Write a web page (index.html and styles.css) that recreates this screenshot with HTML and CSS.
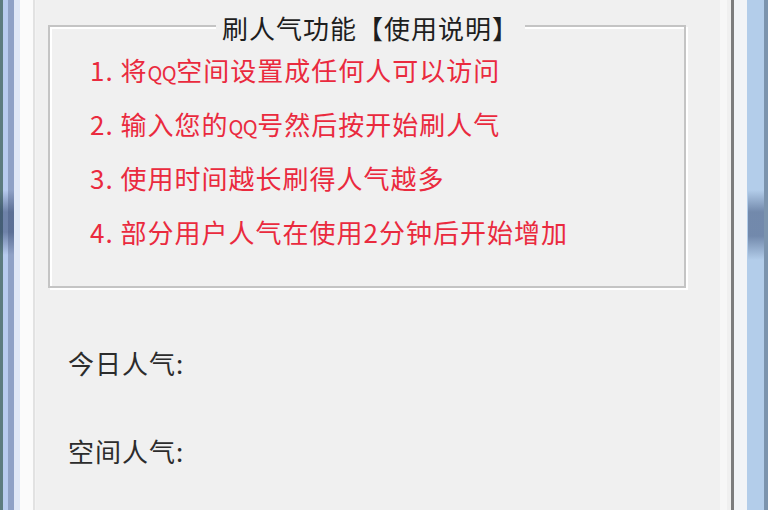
FILE: index.html
```html
<!DOCTYPE html>
<html lang="zh-CN">
<head>
<meta charset="utf-8">
<title>刷人气</title>
<link rel="stylesheet" href="styles.css">
</head>
<body>
<div class="window">
  <div class="frame frame-left"></div>
  <main class="client">
    <fieldset class="group">
      <legend class="group-title">刷人气功能【使用说明】</legend>
      <ol class="steps">
        <li>1. 将<span class="qq">QQ</span>空间设置成任何人可以访问</li>
        <li>2. 输入您的<span class="qq">QQ</span>号然后按开始刷人气</li>
        <li>3. 使用时间越长刷得人气越多</li>
        <li>4. 部分用户人气在使用2分钟后开始增加</li>
      </ol>
    </fieldset>
    <section class="stats">
      <div class="stat">今日人气:</div>
      <div class="stat">空间人气:</div>
    </section>
  </main>
  <div class="frame frame-right"></div>
</div>
</body>
</html>
```
FILE: styles.css
```css
html, body {
  margin: 0;
  padding: 0;
  background: #f0f0f0;
}
body {
  width: 768px;
  height: 510px;
  overflow: hidden;
  font-family: "Noto Sans CJK SC", "Noto Sans", sans-serif;
}
.window {
  display: flex;
  height: 510px;
}
.frame {
  flex: none;
  height: 100%;
}
.frame-left {
  width: 36px;
  background:
    linear-gradient(to bottom, transparent 190px, rgba(50,70,110,.55) 212px, rgba(50,70,110,.55) 232px, transparent 255px) 0 0 / 14px 100% no-repeat,
    linear-gradient(to right, #5c7c80 0 3px, #b7cbef 3px 8px, #8fa2c6 8px 14px, #dfe8f6 14px 20px, #fbfbfb 20px 33px, #e2e2e2 33px 35px, #f3f3f3 35px 36px);
}
.frame-right {
  width: 37px;
  background:
    linear-gradient(to bottom, transparent 190px, rgba(50,70,110,.5) 212px, rgba(50,70,110,.5) 236px, transparent 260px) 17px 0 / 16px 100% no-repeat,
    linear-gradient(to right, #7d7d7d 0 3px, #f2f4f7 3px 16px, #b3cdea 16px 33px, #7c94ae 33px 37px);
}
.client {
  flex: 1;
  background: #f0f0f0;
  padding-top: 9px;
  box-sizing: border-box;
  background-image: linear-gradient(to right, transparent 684px, #f7f7f7 684px 691px, transparent 691px);
}
.group {
  margin: 0 45px 0 12px;
  padding: 0 0 27px 40px;
  border: 2px solid #c4c4c4;
  box-shadow: inset 2px 2px 0 #ffffff, 2px 2px 0 #ffffff;
  min-width: 0;
}
.group-title {
  margin-left: 126px;
  padding: 4px 6px 0;
  background: #f0f0f0;
  font-size: 26px;
  line-height: 30px;
  letter-spacing: 1px;
  color: #1e1e1e;
  white-space: nowrap;
}
.steps {
  list-style: none;
  margin: 0;
  padding: 0;
}
.steps li {
  font-size: 26px;
  line-height: 54px;
  letter-spacing: 1px;
  color: #ea2a3e;
  white-space: nowrap;
}
.qq {
  font-size: 20px;
  line-height: 1;
  letter-spacing: -0.5px;
}
.stats {
  margin: 60px 0 0 32px;
  display: flex;
  flex-direction: column;
  gap: 58px;
}
.stat {
  font-size: 26px;
  line-height: 30px;
  letter-spacing: 1px;
  color: #2c2c2c;
  white-space: nowrap;
}
```
